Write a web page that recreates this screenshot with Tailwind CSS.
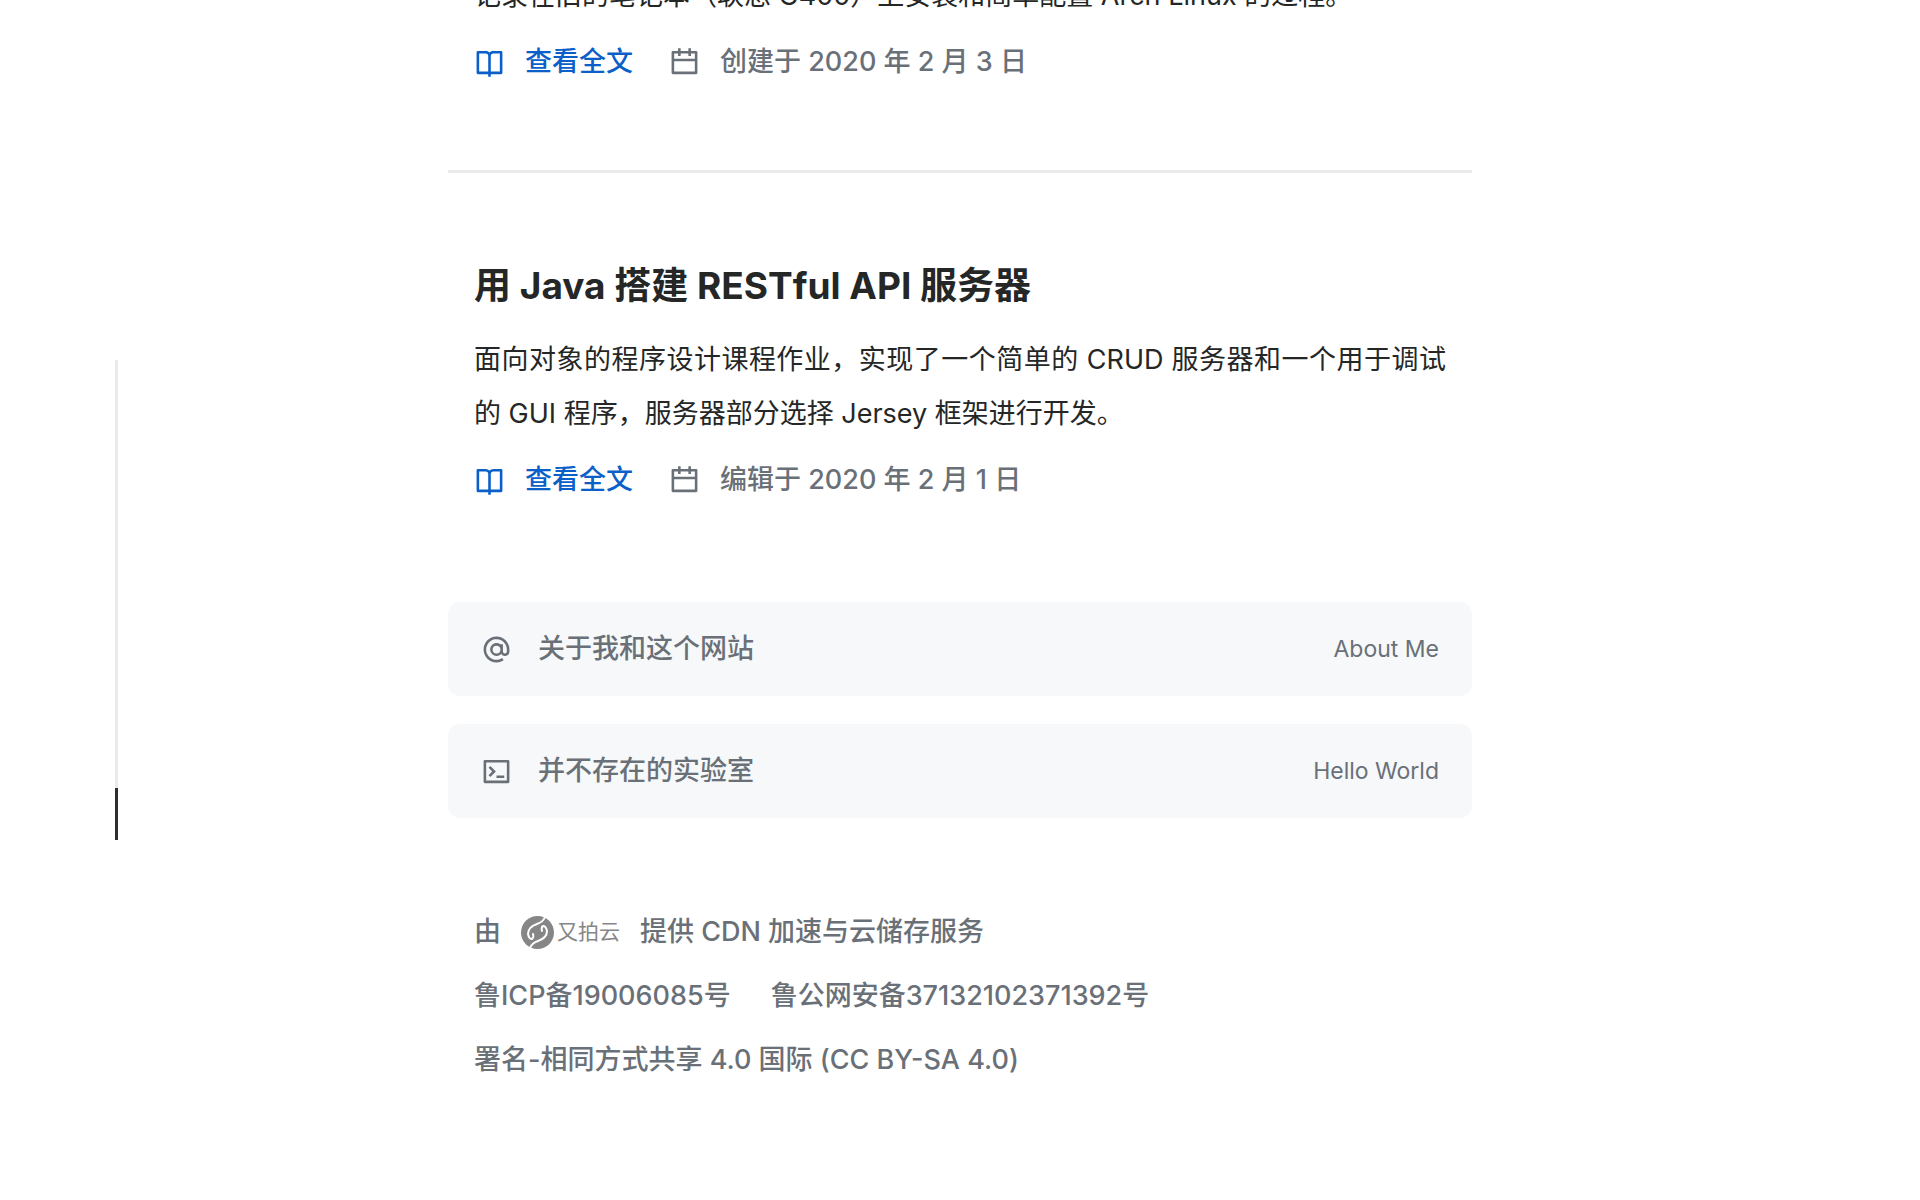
<!DOCTYPE html>
<html lang="zh-CN">
<head>
  <meta charset="UTF-8" />
  <meta name="viewport" content="width=device-width, initial-scale=1.0"/>
  <title>文章列表</title>
  <script src="https://cdn.jsdelivr.net/npm/@tailwindcss/browser@4"></script>
</head>
<body class="bg-white text-[#252727] font-['Inter','Noto_Sans_CJK_SC',sans-serif] text-[27px] leading-[54px] overflow-x-hidden">

  <!-- Reading progress -->
  <div class="fixed left-[115px] top-[30%] h-2/5 w-[3px] bg-[#eaeaea] flex flex-col justify-end" aria-hidden="true">
    <div class="h-[52px] bg-[#2c2f2f]"></div>
  </div>

  <div class="max-w-[1024px] mx-auto -mt-[31px]">
    <main>
      <article class="pb-[81px] border-b-3 border-[#eaecec]">
        <p class="px-[26px] text-justify">记录在旧的笔记本（联想 G400）上安装和简单配置 Arch Linux 的过程。</p>
        <div class="mt-3 px-[26px] flex items-center gap-9 font-medium">
          <a href="#" class="flex items-center gap-5 text-[#0a60c8]">
            <svg class="size-[31px]" viewBox="0 0 24 24" fill="currentColor"><path d="M13 21v2h-2v-2H3a1 1 0 0 1-1-1V4a1 1 0 0 1 1-1h6a3.99 3.99 0 0 1 3 1.354A3.99 3.99 0 0 1 15 3h6a1 1 0 0 1 1 1v16a1 1 0 0 1-1 1h-8zm7-2V5h-5a2 2 0 0 0-2 2v12h7zm-9 0V7a2 2 0 0 0-2-2H4v14h7z"/></svg>
            查看全文
          </a>
          <span class="flex items-center gap-5 text-[#6a7078]">
            <svg class="size-[31px]" viewBox="0 0 24 24" fill="currentColor"><path d="M17 3h4a1 1 0 0 1 1 1v16a1 1 0 0 1-1 1H3a1 1 0 0 1-1-1V4a1 1 0 0 1 1-1h4V1h2v2h6V1h2v2zm-2 2H9v2H7V5H4v4h16V5h-3v2h-2V5zm5 6H4v8h16v-8z"/></svg>
            创建于 2020 年 2 月 3 日
          </span>
        </div>
      </article>

      <article class="pt-[86px]">
        <h2 class="px-[26px] text-[37px] font-bold">用 Java 搭建 RESTful API 服务器</h2>
        <p class="mt-5 px-[26px] text-justify">面向对象的程序设计课程作业，实现了一个简单的 CRUD 服务器和一个用于调试的 GUI 程序，服务器部分选择 Jersey 框架进行开发。</p>
        <div class="mt-3 px-[26px] flex items-center gap-9 font-medium">
          <a href="#" class="flex items-center gap-5 text-[#0a60c8]">
            <svg class="size-[31px]" viewBox="0 0 24 24" fill="currentColor"><path d="M13 21v2h-2v-2H3a1 1 0 0 1-1-1V4a1 1 0 0 1 1-1h6a3.99 3.99 0 0 1 3 1.354A3.99 3.99 0 0 1 15 3h6a1 1 0 0 1 1 1v16a1 1 0 0 1-1 1h-8zm7-2V5h-5a2 2 0 0 0-2 2v12h7zm-9 0V7a2 2 0 0 0-2-2H4v14h7z"/></svg>
            查看全文
          </a>
          <span class="flex items-center gap-5 text-[#6a7078]">
            <svg class="size-[31px]" viewBox="0 0 24 24" fill="currentColor"><path d="M17 3h4a1 1 0 0 1 1 1v16a1 1 0 0 1-1 1H3a1 1 0 0 1-1-1V4a1 1 0 0 1 1-1h4V1h2v2h6V1h2v2zm-2 2H9v2H7V5H4v4h16V5h-3v2h-2V5zm5 6H4v8h16v-8z"/></svg>
            编辑于 2020 年 2 月 1 日
          </span>
        </div>
      </article>
    </main>

    <nav class="mt-[95px] flex flex-col gap-7 text-[#6a7078]">
      <a href="#" class="flex items-center px-[33px] py-5 rounded-xl bg-[#f6f8fa]">
        <svg class="size-[31px]" viewBox="0 0 24 24" fill="currentColor"><path d="M20 12a8 8 0 1 0-3.562 6.657l1.11 1.664A9.953 9.953 0 0 1 12 22C6.477 22 2 17.523 2 12S6.477 2 12 2s10 4.477 10 10v1.5a3.5 3.5 0 0 1-6.396 1.966A5 5 0 1 1 15 8H17v5.5a1.5 1.5 0 0 0 3 0V12zm-8-3a3 3 0 1 0 0 6 3 3 0 0 0 0-6z"/></svg>
        <span class="ml-[26px] font-medium">关于我和这个网站</span>
        <span class="ml-auto text-[23px]">About Me</span>
      </a>
      <a href="#" class="flex items-center px-[33px] py-5 rounded-xl bg-[#f6f8fa]">
        <svg class="size-[31px]" viewBox="0 0 24 24" fill="currentColor"><path d="M3 3h18a1 1 0 0 1 1 1v16a1 1 0 0 1-1 1H3a1 1 0 0 1-1-1V4a1 1 0 0 1 1-1zm1 2v14h16V5H4zm8 10h6v2h-6v-2zm-3.333-3L5.838 9.172l1.415-1.415L11.495 12l-4.242 4.243-1.415-1.415L8.667 12z"/></svg>
        <span class="ml-[26px] font-medium">并不存在的实验室</span>
        <span class="ml-auto text-[23px]">Hello World</span>
      </a>
    </nav>

    <footer class="mt-[82px] mb-24 px-[26px] text-[#6a7078] font-medium leading-[64px]">
      <p class="flex items-center">
        由
        <a href="#" class="mx-5 flex items-center gap-[3px] text-[#868686] text-[21px] font-normal">
          <svg class="size-[33px]" viewBox="0 0 33 33" fill="none">
            <circle cx="16.500" cy="16.500" r="16.500" fill="#868686"/>
            <g stroke="#fff" stroke-width="2" stroke-linecap="round" stroke-linejoin="round">
              <path d="M24 1Q22 6 16 8Q7 11 7 18Q8 23 11 23Q13 22 12 18"/>
              <path d="M9 32Q11 27 17 25Q26 22 26 15Q25 10 22 10Q20 11 21 15"/>
            </g>
          </svg>
          又拍云
        </a>
        提供 CDN 加速与云储存服务
      </p>
      <p class="flex gap-10">
        <a href="#">鲁ICP备19006085号</a>
        <a href="#">鲁公网安备37132102371392号</a>
      </p>
      <p><a href="#">署名-相同方式共享 4.0 国际 (CC BY-SA 4.0)</a></p>
    </footer>
  </div>
</body>
</html>
